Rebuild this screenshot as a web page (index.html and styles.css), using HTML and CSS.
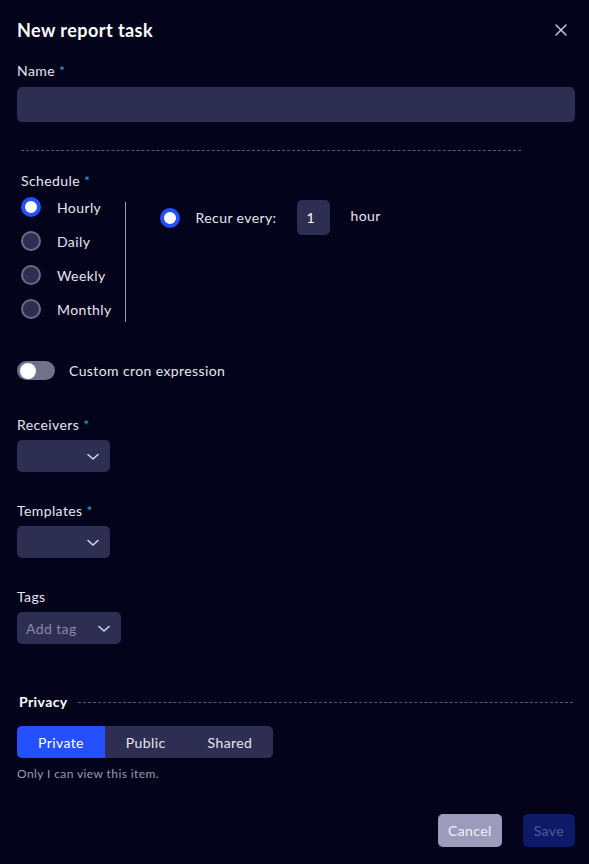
FILE: index.html
```html
<!DOCTYPE html>
<html>
<head>
<meta charset="utf-8">
<link rel="stylesheet" href="styles.css">
</head>
<body>
<div class="modal">
  <div class="header">
    <h1 class="title">New report task</h1>
    <svg class="close" width="12" height="12" viewBox="0 0 12 12"><path d="M1 1L11 11M11 1L1 11" stroke="#c8c8dc" stroke-width="1.5" fill="none" stroke-linecap="round"/></svg>
  </div>

  <label class="label name-label">Name <span class="req">*</span></label>
  <div class="input"></div>

  <div class="dash"></div>

  <div class="schedule">
    <label class="label">Schedule <span class="req">*</span></label>
    <div class="sched-body">
      <div class="radios">
        <div class="radio-row"><span class="radio on"></span><span>Hourly</span></div>
        <div class="radio-row"><span class="radio"></span><span>Daily</span></div>
        <div class="radio-row"><span class="radio"></span><span>Weekly</span></div>
        <div class="radio-row"><span class="radio"></span><span>Monthly</span></div>
      </div>
      <div class="vline"></div>
      <div class="recur">
        <span class="radio on"></span>
        <span class="recur-text">Recur every:</span>
        <div class="num">1</div>
        <span class="unit">hour</span>
      </div>
    </div>
  </div>

  <div class="toggle-row">
    <span class="toggle"><span class="knob"></span></span>
    <span>Custom cron expression</span>
  </div>

  <div class="field">
    <label class="label">Receivers <span class="req">*</span></label>
    <div class="select"><span></span><svg class="chev" width="12" height="8" viewBox="0 0 12 8"><path d="M1 1.5L6 6L11 1.5" stroke="#d4d4e6" stroke-width="1.6" fill="none" stroke-linecap="round" stroke-linejoin="round"/></svg></div>
  </div>

  <div class="field">
    <label class="label">Templates <span class="req">*</span></label>
    <div class="select"><span></span><svg class="chev" width="12" height="8" viewBox="0 0 12 8"><path d="M1 1.5L6 6L11 1.5" stroke="#d4d4e6" stroke-width="1.6" fill="none" stroke-linecap="round" stroke-linejoin="round"/></svg></div>
  </div>

  <div class="field">
    <label class="label">Tags</label>
    <div class="select tags"><span class="ph">Add tag</span><svg class="chev" width="12" height="8" viewBox="0 0 12 8"><path d="M1 1.5L6 6L11 1.5" stroke="#d4d4e6" stroke-width="1.6" fill="none" stroke-linecap="round" stroke-linejoin="round"/></svg></div>
  </div>

  <div class="privacy-head">
    <span class="privacy-title">Privacy</span>
    <span class="privacy-dash"></span>
  </div>
  <div class="seg">
    <span class="seg-item active">Private</span>
    <span class="seg-item">Public</span>
    <span class="seg-item">Shared</span>
  </div>
  <div class="help">Only I can view this item.</div>

  <div class="footer">
    <button class="btn cancel">Cancel</button>
    <button class="btn save">Save</button>
  </div>
</div>
</body>
</html>
```

FILE: styles.css
```css
html, body {
  margin: 0;
  padding: 0;
  background: #03031b;
}
body {
  font-family: Lato, "Noto Sans", sans-serif;
  color: #e6e6f0;
  font-size: 14px;
  letter-spacing: 0.4px;
}
.modal {
  padding: 17px 14px 0 17px;
  display: flex;
  flex-direction: column;
}
.header {
  display: flex;
  justify-content: space-between;
  align-items: center;
  height: 26px;
}
.title {
  margin: 0;
  font-size: 18px;
  font-weight: 700;
  color: #ffffff;
  line-height: 26px;
  letter-spacing: 0.45px;
}
.close {
  margin-right: 8px;
}
.label {
  display: block;
  font-size: 14px;
  line-height: 20px;
  color: #e6e6f0;
}
.req {
  color: #3a9fd8;
}
.name-label {
  margin-top: 18px;
}
.input {
  margin-top: 6px;
  height: 35px;
  background: #2e2e52;
  border-radius: 5px;
}
.dash {
  margin: 28px 54px 0 4px;
  border-top: 1px dashed #5a5a7c;
}
.schedule {
  margin-top: 20px;
  padding-left: 4px;
}
.sched-body {
  display: flex;
  align-items: flex-start;
  margin-top: -1px;
}
.radios {
  display: flex;
  flex-direction: column;
}
.radio-row {
  display: flex;
  align-items: center;
  height: 34px;
  gap: 16px;
}
.radio {
  width: 20px;
  height: 20px;
  box-sizing: border-box;
  border-radius: 50%;
  border: 2px solid #6c6c86;
  background: #2e2e52;
  flex: none;
}
.radio.on {
  border: 4px solid #2450ff;
  background: #ffffff;
}
.vline {
  width: 1px;
  background: #9a9ab0;
  height: 120px;
  margin: 12px 0 0 13px;
}
.recur {
  display: flex;
  align-items: center;
  margin: 10px 0 0 34px;
  height: 35px;
}
.recur-text {
  margin-left: 16px;
}
.num {
  margin-left: 21px;
  width: 33px;
  height: 35px;
  background: #2e2e52;
  border-radius: 5px;
  box-sizing: border-box;
  padding-left: 9px;
  line-height: 35px;
  color: #ffffff;
}
.unit {
  margin-left: 20px;
  margin-top: -4px;
}
.toggle-row {
  margin-top: 35px;
  display: flex;
  align-items: center;
  gap: 14px;
}
.toggle {
  width: 38px;
  height: 19px;
  border-radius: 10px;
  background: #71718c;
  display: flex;
  align-items: center;
  padding-left: 3px;
  box-sizing: border-box;
}
.knob {
  width: 16px;
  height: 16px;
  border-radius: 50%;
  background: #ffffff;
}
.field {
  margin-top: 35px;
}
.field + .field {
  margin-top: 29px;
}
.select {
  margin-top: 5px;
  width: 93px;
  height: 32px;
  background: #2e2e52;
  border-radius: 5px;
  display: flex;
  align-items: center;
  justify-content: space-between;
  box-sizing: border-box;
  padding: 0 11px 0 9px;
}
.select.tags {
  width: 104px;
}
.ph {
  color: #8a8aa6;
}
.chev {
  margin-top: 1px;
}
.privacy-head {
  margin-top: 48px;
  display: flex;
  align-items: center;
  padding-left: 2px;
  gap: 10px;
}
.privacy-title {
  font-weight: 700;
  color: #ffffff;
  line-height: 20px;
}
.privacy-dash {
  flex: 1;
  border-top: 1px dashed #5a5a7c;
  margin-right: 2px;
}
.seg {
  margin-top: 14px;
  display: flex;
  align-self: flex-start;
  height: 32px;
  background: #2e2e52;
  border-radius: 5px;
  overflow: hidden;
}
.seg-item {
  display: flex;
  align-items: center;
  justify-content: center;
  padding: 0 21px;
  color: #e6e6f0;
}
.seg-item.active {
  background: #2450ff;
  color: #ffffff;
}
.help {
  margin-top: 8px;
  font-size: 12px;
  color: #9a9ab4;
  line-height: 16px;
}
.footer {
  margin-top: 32px;
  display: flex;
  justify-content: flex-end;
  gap: 21px;
}
.btn {
  font-family: Lato, "Noto Sans", sans-serif;
  font-size: 14px;
  letter-spacing: 0.4px;
  height: 33px;
  border: none;
  border-radius: 5px;
  padding: 0 10px;
}
.cancel {
  background: #9b9cbc;
  color: #f2f2fa;
}
.save {
  background: #0d1a68;
  color: #4d5b9c;
  padding: 0 11px;
}
```
